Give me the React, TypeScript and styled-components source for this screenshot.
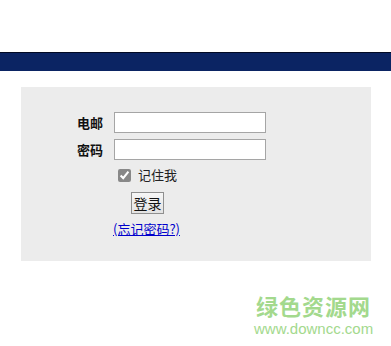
import React from "react";
import styled, { createGlobalStyle } from "styled-components";

const Global = createGlobalStyle`
  html, body { margin: 0; padding: 0; background: #fff; }
  body { font-family: "Noto Sans CJK SC", "Liberation Sans", sans-serif; width: 391px; height: 346px; overflow: hidden; position: relative; }
`;

const Page = styled.div`
  padding-top: 52px;
`;

const Bar = styled.div`
  height: 18px;
  border-top: 1px solid #020a24;
  background: #0b2463;
`;

const Panel = styled.div`
  margin: 16px 0 0 21px;
  width: 350px;
  height: 174px;
  box-sizing: border-box;
  background: #ececec;
  padding: 25px 0 0 56px;
`;

const Form = styled.div`
  display: grid;
  grid-template-columns: 26px 152px;
  column-gap: 11px;
  row-gap: 6px;
  align-items: center;
`;

const Label = styled.label`
  font-size: 13px;
  font-weight: bold;
  color: #111;
  line-height: 21px;
`;

const Input = styled.input`
  box-sizing: border-box;
  width: 152px;
  height: 21px;
  margin: 0;
  border: 1px solid #a5a5a5;
  background: #fff;
`;

const Cell = styled.div<{ $indent: number; $top: number }>`
  grid-column: 2;
  margin-left: ${(p) => p.$indent}px;
  margin-top: ${(p) => p.$top}px;
  display: flex;
  align-items: center;
  height: 16px;
  &:has(button) { height: 22px; }
`;

const Check = styled.input`
  width: 13px;
  height: 13px;
  margin: 0 7px 0 0;
  accent-color: #888;
`;

const CheckText = styled.span`
  font-size: 13px;
  line-height: 16px;
  color: #222;
`;

const Button = styled.button`
  box-sizing: border-box;
  width: 33px;
  height: 22px;
  padding: 0;
  border: 1px solid #8f8f8f;
  background: linear-gradient(#f6f6f6, #e3e3e3);
  font-family: inherit;
  font-size: 14px;
  color: #111;
  line-height: 18px;
`;

const Link = styled.a`
  font-size: 13px;
  line-height: 16px;
  color: #0000cc;
  text-decoration: underline;
`;

const Watermark = styled.div`
  position: absolute;
  left: 254px;
  top: 290px;
  display: flex;
  flex-direction: column;
  align-items: center;
  color: #a3d98d;
`;

const WmTitle = styled.div`
  font-size: 22px;
  font-weight: bold;
  letter-spacing: 1px;
  line-height: 30px;
`;

const WmUrl = styled.div`
  font-family: "Liberation Sans", Arial, sans-serif;
  font-size: 15px;
  line-height: 17px;
`;

export default function App() {
  return (
    <>
      <Global />
      <Page>
        <Bar />
        <Panel>
          <Form>
            <Label>电邮</Label>
            <Input type="text" />
            <Label>密码</Label>
            <Input type="password" />
            <Cell $indent={4} $top={1}>
              <Check type="checkbox" defaultChecked />
              <CheckText>记住我</CheckText>
            </Cell>
            <Cell $indent={17} $top={3}>
              <Button>登录</Button>
            </Cell>
            <Cell $indent={-1} $top={1}>
              <Link href="#">(忘记密码?)</Link>
            </Cell>
          </Form>
        </Panel>
      </Page>
      <Watermark>
        <WmTitle>绿色资源网</WmTitle>
        <WmUrl>www.downcc.com</WmUrl>
      </Watermark>
    </>
  );
}
